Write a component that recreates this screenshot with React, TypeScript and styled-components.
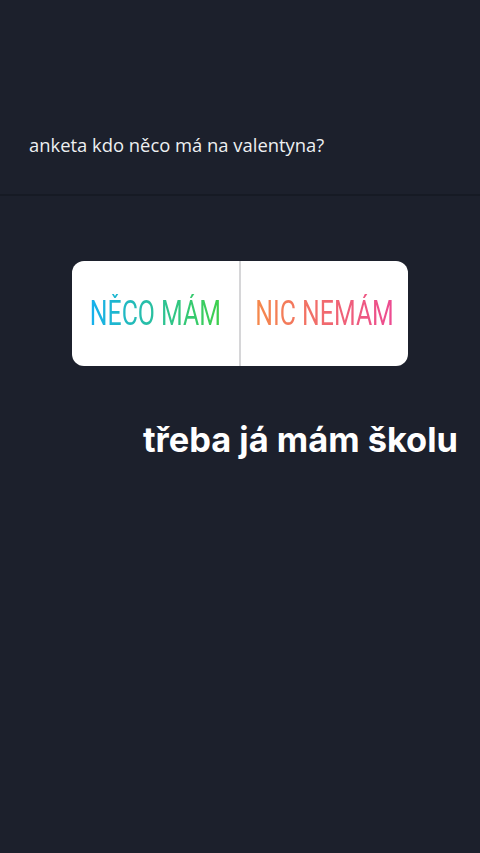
import React from "react";
import styled, { createGlobalStyle } from "styled-components";

const Global = createGlobalStyle`
  html, body { margin: 0; padding: 0; background: #1c202c; }
  #root { min-height: 853px; }
`;

const Page = styled.div`
  width: 480px;
  height: 853px;
  background: #1c202c;
  display: flex;
  flex-direction: column;
  overflow: hidden;
`;

const Header = styled.div`
  height: 196px;
  box-sizing: border-box;
  padding: 132px 0 0 29px;
  border-bottom: 2px solid #161a24;
`;

const Question = styled.div`
  font-family: "Open Sans", "Noto Sans", sans-serif;
  font-size: 18.4px;
  line-height: 26px;
  color: #eef0f2;
`;

const Body = styled.div`
  display: flex;
  flex-direction: column;
  padding: 65px 0 0 72px;
`;

const Poll = styled.div`
  width: 336px;
  height: 105px;
  background: #ffffff;
  border-radius: 12px;
  display: grid;
  grid-template-columns: minmax(0, 1fr) 2px minmax(0, 1fr);
  overflow: hidden;
`;

const Cell = styled.div`
  min-width: 0;
  display: flex;
  align-items: center;
  justify-content: center;
`;

const Divider = styled.div`
  width: 2px;
  height: 100%;
  background: #d6d6d8;
`;

const Option = styled.span<{ $from: string; $to: string }>`
  flex: none;
  display: inline-block;
  white-space: nowrap;
  font-family: Roboto, "Liberation Sans", sans-serif;
  font-weight: 400;
  font-size: 35px;
  line-height: 40px;
  transform: scaleX(0.71);
  background: linear-gradient(90deg, ${(p) => p.$from}, ${(p) => p.$to});
  -webkit-background-clip: text;
  background-clip: text;
  color: transparent;
`;

const Caption = styled.div`
  margin: 54px 0 0 71px;
  font-family: Inter, "Liberation Sans", sans-serif;
  font-weight: 700;
  font-size: 34.4px;
  line-height: 40px;
  color: #ffffff;
  white-space: nowrap;
`;

export default function App() {
  return (
    <Page>
      <Global />
      <Header>
        <Question>anketa kdo něco má na valentyna?</Question>
      </Header>
      <Body>
        <Poll>
          <Cell>
            <Option $from="#16b0ef" $to="#3fd14a">NĚCO MÁM</Option>
          </Cell>
          <Divider />
          <Cell>
            <Option $from="#f5894a" $to="#ec4a92">NIC NEMÁM</Option>
          </Cell>
        </Poll>
        <Caption>třeba já mám školu</Caption>
      </Body>
    </Page>
  );
}
